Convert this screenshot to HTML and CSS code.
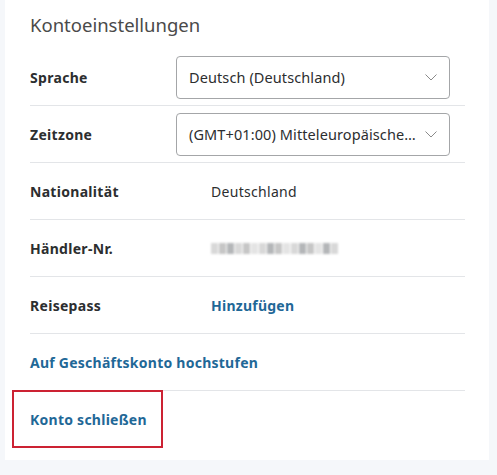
FILE: index.html
```html
<!DOCTYPE html>
<html>
<head>
    <title>Kontoeinstellungen</title>
    <meta charset="UTF-8">
    <link rel="stylesheet" href="styles.css">
</head>
<body>
    <div class="card">
        <h2 class="card-title">Kontoeinstellungen</h2>

        <div class="row row-select">
            <span class="label">Sprache</span>
            <div class="select">
                <span class="select-text">Deutsch (Deutschland)</span>
                <svg class="chevron" width="12" height="7" viewBox="0 0 12 7"><path d="M0.5 0.5 L6 6 L11.5 0.5" fill="none" stroke="#8a8a8a" stroke-width="1"/></svg>
            </div>
        </div>

        <div class="row row-select">
            <span class="label">Zeitzone</span>
            <div class="select">
                <span class="select-text" title="(GMT+01:00) Mitteleuropäische Zeit">(GMT+01:00) Mitteleuropäische…</span>
                <svg class="chevron" width="12" height="7" viewBox="0 0 12 7"><path d="M0.5 0.5 L6 6 L11.5 0.5" fill="none" stroke="#8a8a8a" stroke-width="1"/></svg>
            </div>
        </div>

        <div class="row row-text">
            <span class="label">Nationalität</span>
            <span class="value">Deutschland</span>
        </div>

        <div class="row row-text">
            <span class="label">Händler-Nr.</span>
            <span class="masked">
                <i class="px p1"></i><i class="px p2"></i><i class="px p3"></i><i class="px p1"></i>
                <i class="px p2"></i><i class="px p4"></i><i class="px p1"></i><i class="px p3"></i>
                <i class="px p2"></i><i class="px p4"></i><i class="px p1"></i><i class="px p3"></i>
                <i class="px p2"></i><i class="px p4"></i><i class="px p3"></i><i class="px p1"></i>
            </span>
        </div>

        <div class="row row-text">
            <span class="label">Reisepass</span>
            <a class="link" href="#">Hinzufügen</a>
        </div>

        <div class="row">
            <a class="link" href="#">Auf Geschäftskonto hochstufen</a>
        </div>

        <div class="row row-last">
            <a class="link marked" href="#">Konto schließen</a>
        </div>
    </div>
</body>
</html>
```

FILE: styles.css
```css
/* Grundlayout */
body {
    margin: 0;
    background-color: #f5f7fa;
    font-family: "Noto Sans", "Open Sans", sans-serif;
    color: #2c2e2f;
}
.card {
    width: 435px;
    margin: 0 0 15px 5px;
    padding: 0 24px 13px 25px;
    background-color: #ffffff;
}
.card-title {
    margin: 0;
    height: 49px;
    padding-top: 12px;
    box-sizing: border-box;
    font-size: 18.5px;
    line-height: 26px;
    font-weight: 400;
    color: #4a4a4a;
}

/* Zeilen */
.row {
    display: flex;
    align-items: center;
    height: 56px;
    border-bottom: 1px solid #e3e5e8;
    font-size: 14px;
}
.row-last {
    border-bottom: none;
}
.label {
    font-weight: 700;
    letter-spacing: 0.3px;
    color: #2c2e2f;
}
.row-select .label {
    width: 146px;
    flex: none;
}
.row-text .label {
    width: 181px;
    flex: none;
}
.value {
    letter-spacing: 0.3px;
    color: #2c2e2f;
}
.link {
    font-weight: 700;
    letter-spacing: 0.25px;
    color: #1f6897;
    text-decoration: none;
}

/* Auswahlfelder */
.select {
    display: flex;
    align-items: center;
    width: 274px;
    height: 43px;
    box-sizing: border-box;
    padding: 0 12px 0 12px;
    border: 1px solid #a4a6a8;
    border-radius: 4px;
}
.select-text {
    flex: 1;
    min-width: 0;
    font-size: 14.5px;
    letter-spacing: 0.1px;
    white-space: nowrap;
}
.chevron {
    flex: none;
    margin-left: 2px;
}

/* verpixelte Händlernummer */
.masked {
    display: flex;
    gap: 1px;
    height: 11px;
    filter: blur(0.8px);
}
.px {
    width: 7px;
    height: 11px;
}
.p1 { background-color: #d8d8d8; }
.p2 { background-color: #c6c6c6; }
.p3 { background-color: #b4b6b8; }
.p4 { background-color: #e4e4e4; }

/* roter Rahmen um "Konto schließen" */
.marked {
    position: relative;
}
.marked::after {
    content: "";
    position: absolute;
    left: -18px;
    right: -16px;
    top: -20px;
    bottom: -19px;
    border: 2px solid #cc2233;
}
```
